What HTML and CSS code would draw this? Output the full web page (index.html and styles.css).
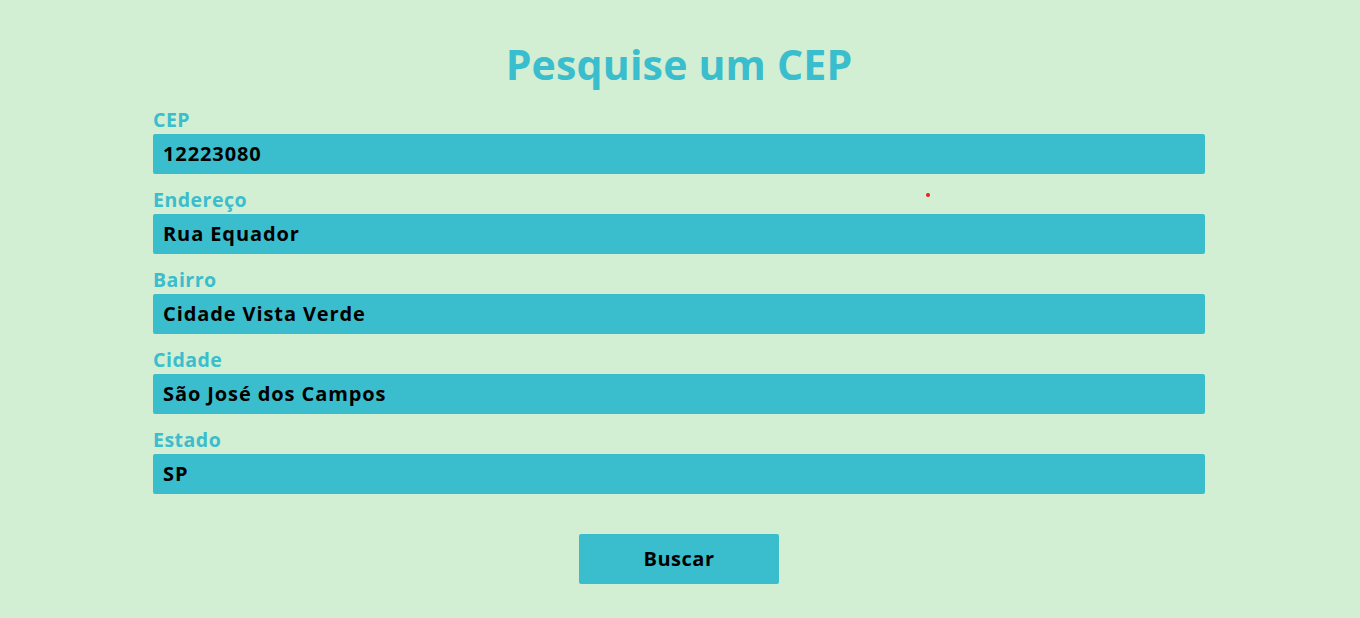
FILE: index.html
```html
<!DOCTYPE html>
<html lang="pt-BR">
<head>
<meta charset="utf-8">
<title>Pesquise um CEP</title>
<link rel="stylesheet" href="styles.css">
</head>
<body>
<main class="page">
  <h1 class="title">Pesquise um CEP</h1>
  <form class="form">
    <label class="field">
      <span class="label">CEP</span>
      <input class="input" type="text" value="12223080">
    </label>
    <label class="field">
      <span class="label">Endereço</span>
      <input class="input" type="text" value="Rua Equador">
    </label>
    <label class="field">
      <span class="label">Bairro</span>
      <input class="input" type="text" value="Cidade Vista Verde">
    </label>
    <label class="field">
      <span class="label">Cidade</span>
      <input class="input" type="text" value="São José dos Campos">
    </label>
    <label class="field">
      <span class="label">Estado</span>
      <input class="input" type="text" value="SP">
    </label>
    <div class="actions">
      <button class="button" type="button">Buscar</button>
    </div>
  </form>
  <span class="dot"></span>
</main>
</body>
</html>
```
FILE: styles.css
```css
html, body {
  margin: 0;
  padding: 0;
  background: #d2eed3;
  height: 100%;
}
body {
  font-family: "Open Sans", "DejaVu Sans", sans-serif;
  font-weight: 700;
}
.page {
  position: relative;
  width: 1052px;
  margin-left: calc(50% - 527px);
  padding-top: 38px;
}
.title {
  margin: 0;
  text-align: center;
  color: #3abdcc;
  font-size: 41px;
  line-height: 52px;
  font-weight: 700;
  letter-spacing: 0.2px;
}
.form {
  display: flex;
  flex-direction: column;
  margin-top: 20px;
}
.field {
  display: flex;
  flex-direction: column;
  margin-bottom: 16px;
}
.label {
  color: #3abdcc;
  font-size: 19.5px;
  line-height: 20px;
  height: 20px;
  padding-bottom: 4px;
  letter-spacing: 0.5px;
}
.input {
  box-sizing: border-box;
  height: 40px;
  border: none;
  border-radius: 2px;
  background: #3abdcc;
  color: #000;
  font-family: inherit;
  font-weight: 700;
  font-size: 20px;
  letter-spacing: 0.9px;
  padding: 0 10px 2px;
  outline: none;
}
.actions {
  display: flex;
  justify-content: center;
  margin-top: 24px;
}
.button {
  width: 200px;
  height: 50px;
  border: none;
  border-radius: 2px;
  background: #3abdcc;
  color: #000;
  font-family: inherit;
  font-weight: 700;
  font-size: 20px;
  letter-spacing: 0.5px;
  padding: 0 0 2px;
}
.dot {
  position: absolute;
  left: 773px;
  top: 193px;
  width: 4px;
  height: 4px;
  border-radius: 50%;
  background: #e8201a;
}
```
